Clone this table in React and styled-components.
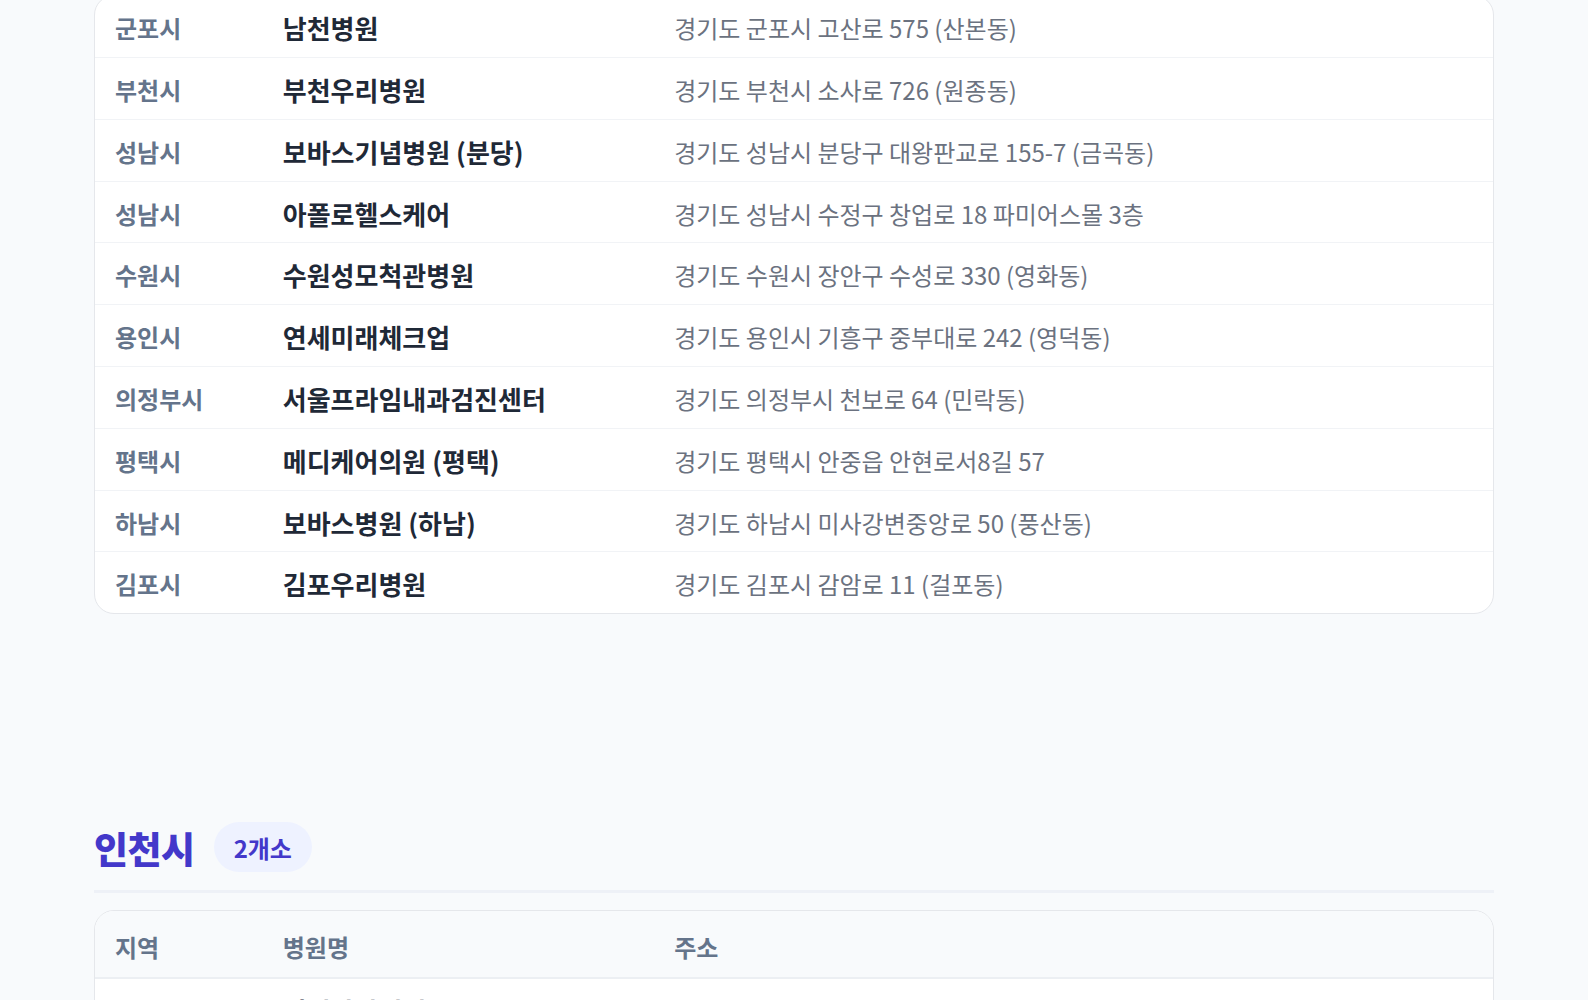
import React from "react";
import styled, { createGlobalStyle } from "styled-components";

const GlobalStyle = createGlobalStyle`
  html, body {
    margin: 0;
    padding: 0;
    overflow: hidden;
    background: #f8fafc;
  }
  body {
    font-family: "Noto Sans CJK KR", "Noto Sans", sans-serif;
    color: #1e293b;
  }
`;

const Page = styled.main`
  max-width: 1400px;
  margin: 0 auto;
  display: flex;
  flex-direction: column;
`;

const Section = styled.section`
  display: flex;
  flex-direction: column;
  margin-top: ${(p) => p.$offset}px;
`;

const SectionHeader = styled.div`
  display: flex;
  align-items: center;
  gap: 19px;
  padding-bottom: 18px;
  border-bottom: 3px solid #eef1f7;
  margin-bottom: 17px;
`;

const Title = styled.h2`
  margin: 0;
  font-size: 37px;
  line-height: 1.2;
  font-weight: 800;
  color: #4338ca;
  letter-spacing: -0.5px;
  transform: translateY(1px);
`;

const CountBadge = styled.span`
  display: inline-flex;
  align-items: center;
  height: 50px;
  padding: 1px 20px 0;
  box-sizing: border-box;
  border-radius: 999px;
  background: #eef2ff;
  color: #4338ca;
  font-size: 24px;
  font-weight: 700;
`;

const Card = styled.div`
  background: #ffffff;
  border: 1px solid #e5e7eb;
  border-radius: 20px;
  overflow: hidden;
`;

const Table = styled.table`
  width: 100%;
  border-collapse: collapse;
  table-layout: fixed;
`;

const HeadCell = styled.th`
  text-align: left;
  padding: 19px 20px 14px;
  height: 66px;
  box-sizing: border-box;
  font-size: 24px;
  line-height: 33px;
  font-weight: 700;
  color: #64748b;
  background: #f8fafc;
  border-bottom: 2px solid #eceff3;
`;

const Row = styled.tr`
  border-bottom: 1px solid #f1f3f6;
  &:last-child {
    border-bottom: none;
  }
`;

const Cell = styled.td`
  padding: 16px 20px 12px;
  line-height: 32.8px;
  white-space: nowrap;
`;

const RegionCell = styled(Cell)`
  font-size: 24px;
  font-weight: 600;
  color: #64748b;
`;

const NameCell = styled(Cell)`
  font-size: 26px;
  font-weight: 700;
  color: #1f2937;
`;

const AddressCell = styled(Cell)`
  font-size: 24px;
  font-weight: 400;
  color: #6b7280;
`;

const gyeonggi = [
  ["군포시", "남천병원", "경기도 군포시 고산로 575 (산본동)"],
  ["부천시", "부천우리병원", "경기도 부천시 소사로 726 (원종동)"],
  ["성남시", "보바스기념병원 (분당)", "경기도 성남시 분당구 대왕판교로 155-7 (금곡동)"],
  ["성남시", "아폴로헬스케어", "경기도 성남시 수정구 창업로 18 파미어스몰 3층"],
  ["수원시", "수원성모척관병원", "경기도 수원시 장안구 수성로 330 (영화동)"],
  ["용인시", "연세미래체크업", "경기도 용인시 기흥구 중부대로 242 (영덕동)"],
  ["의정부시", "서울프라임내과검진센터", "경기도 의정부시 천보로 64 (민락동)"],
  ["평택시", "메디케어의원 (평택)", "경기도 평택시 안중읍 안현로서8길 57"],
  ["하남시", "보바스병원 (하남)", "경기도 하남시 미사강변중앙로 50 (풍산동)"],
  ["김포시", "김포우리병원", "경기도 김포시 감암로 11 (걸포동)"],
];

const incheon = [
  ["인천시", "인천사랑병원", "인천광역시 미추홀구 미추홀대로 726 (주안동)"],
  ["인천시", "나사렛국제병원", "인천광역시 연수구 먼우금로 98 (동춘동)"],
];

function Cols() {
  return (
    <colgroup>
      <col style={{ width: "12%" }} />
      <col style={{ width: "28%" }} />
      <col style={{ width: "60%" }} />
    </colgroup>
  );
}

function Body({ rows }) {
  return (
    <tbody>
      {rows.map(([r, n, a], i) => (
        <Row key={i}>
          <RegionCell>{r}</RegionCell>
          <NameCell>{n}</NameCell>
          <AddressCell>{a}</AddressCell>
        </Row>
      ))}
    </tbody>
  );
}

export default function App() {
  return (
    <>
      <GlobalStyle />
      <Page>
        <Section $offset={-4.8}>
          <Card>
            <Table>
              <Cols />
              <Body rows={gyeonggi} />
            </Table>
          </Card>
        </Section>
        <Section $offset={208}>
          <SectionHeader>
            <Title>인천시</Title>
            <CountBadge>2개소</CountBadge>
          </SectionHeader>
          <Card>
            <Table>
              <Cols />
              <thead>
                <tr>
                  <HeadCell>지역</HeadCell>
                  <HeadCell>병원명</HeadCell>
                  <HeadCell>주소</HeadCell>
                </tr>
              </thead>
              <Body rows={incheon} />
            </Table>
          </Card>
        </Section>
      </Page>
    </>
  );
}
